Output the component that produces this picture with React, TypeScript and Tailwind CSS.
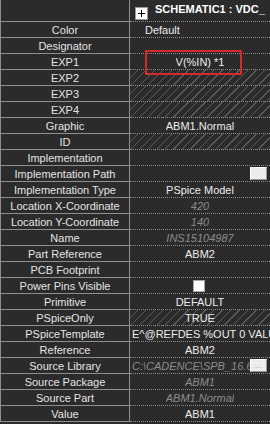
import React from "react";

type Kind = "text" | "muted" | "hatch" | "empty";

interface Prop {
  label: string;
  value?: string;
  kind?: Kind;
  align?: "center" | "left";
  extra?: "button" | "check" | "ellipsis";
}

const PROPS: Prop[] = [
  { label: "Color", value: "Default", align: "left" },
  { label: "Designator" },
  { label: "EXP1", value: "V(%IN) *1" },
  { label: "EXP2", kind: "hatch" },
  { label: "EXP3", kind: "hatch" },
  { label: "EXP4", kind: "hatch" },
  { label: "Graphic", value: "ABM1.Normal" },
  { label: "ID", kind: "hatch" },
  { label: "Implementation" },
  { label: "Implementation Path", extra: "button" },
  { label: "Implementation Type", value: "PSpice Model" },
  { label: "Location X-Coordinate", value: "420", kind: "muted" },
  { label: "Location Y-Coordinate", value: "140", kind: "muted" },
  { label: "Name", value: "INS15104987", kind: "muted" },
  { label: "Part Reference", value: "ABM2" },
  { label: "PCB Footprint" },
  { label: "Power Pins Visible", extra: "check" },
  { label: "Primitive", value: "DEFAULT" },
  { label: "PSpiceOnly", value: "TRUE", kind: "hatch" },
  { label: "PSpiceTemplate", value: "E^@REFDES %OUT 0 VALU", align: "left" },
  { label: "Reference", value: "ABM2" },
  { label: "Source Library", value: "C:\\CADENCE\\SPB_16.6", kind: "muted", align: "left", extra: "ellipsis" },
  { label: "Source Package", value: "ABM1", kind: "muted" },
  { label: "Source Part", value: "ABM1.Normal", kind: "muted" },
  { label: "Value", value: "ABM1" },
];

function SmallButton({ dots }: { dots?: boolean }) {
  return (
    <div className="absolute right-[3px] top-[1px] flex h-[13px] w-[17px] items-end justify-center border border-t-white border-l-white border-r-[#9a9a9a] border-b-[#9a9a9a] bg-[#ececec] pb-[1px] text-[9px] leading-none text-[#b4b4b4]">
      {dots ? "..." : ""}
    </div>
  );
}

function Row({ p }: { p: Prop }) {
  const valueColor = p.kind === "muted" ? "text-[#8c8c8c] italic" : "text-[#ececec]";
  const hatch =
    p.kind === "hatch"
      ? "bg-[repeating-linear-gradient(135deg,transparent_0px,transparent_5px,rgba(150,150,150,0.45)_5px,rgba(150,150,150,0.45)_6px)]"
      : "";
  let pad = "justify-center";
  if (p.align === "left") pad = p.value === "Default" ? "pl-[15px]" : "pl-[2px]";
  return (
    <div className="flex h-4">
      <div className="flex w-[129px] shrink-0 items-center justify-center border-r border-b border-[#8e8e8e] text-[#e4e4e4]">
        {p.label}
      </div>
      <div
        className={`relative flex min-w-0 flex-1 items-center overflow-hidden whitespace-nowrap border-b border-dotted border-[#8a8a8a] ${hatch} ${pad} ${
          p.extra === "ellipsis" ? "pr-[20px]" : ""
        }`}
      >
        {p.extra === "check" && (
          <div className="-ml-[2px] h-[12px] w-[12px] border border-[#a8a8a8] bg-white" />
        )}
        {p.value && <span className={`overflow-hidden ${valueColor}`}>{p.value}</span>}
        {p.extra === "button" && <SmallButton />}
        {p.extra === "ellipsis" && <SmallButton dots />}
      </div>
    </div>
  );
}

export default function App() {
  return (
    <div className="h-[424px] w-[270px] overflow-hidden bg-[#2b2b2b] text-[11px] leading-4 font-['Liberation_Sans',Arial,sans-serif]">
      <div className="relative border-l border-[#8e8e8e]">
        {/* header */}
        <div className="flex h-[22px]">
          <div className="w-[129px] shrink-0 border-r border-b border-[#8e8e8e]" />
          <div className="flex flex-1 items-start border-b border-dotted border-[#8a8a8a] pl-[5px]">
            <div className="mt-[7px] flex h-[13px] w-[13px] items-center justify-center border border-[#9a9a9a] bg-white">
              <svg width="9" height="9" viewBox="0 0 9 9">
                <path d="M1 4.5H8M4.5 1V8" stroke="#000" strokeWidth="1" />
              </svg>
            </div>
            <span className="mt-[1px] ml-[7px] whitespace-nowrap font-bold text-white">SCHEMATIC1 : VDC_</span>
          </div>
        </div>
        {PROPS.map((p) => (
          <Row key={p.label} p={p} />
        ))}
        {/* highlight around EXP1 value */}
        <div className="pointer-events-none absolute left-[144px] top-[50px] h-[25px] w-[97px] border-2 border-[#d42a2a]" />
      </div>
    </div>
  );
}
